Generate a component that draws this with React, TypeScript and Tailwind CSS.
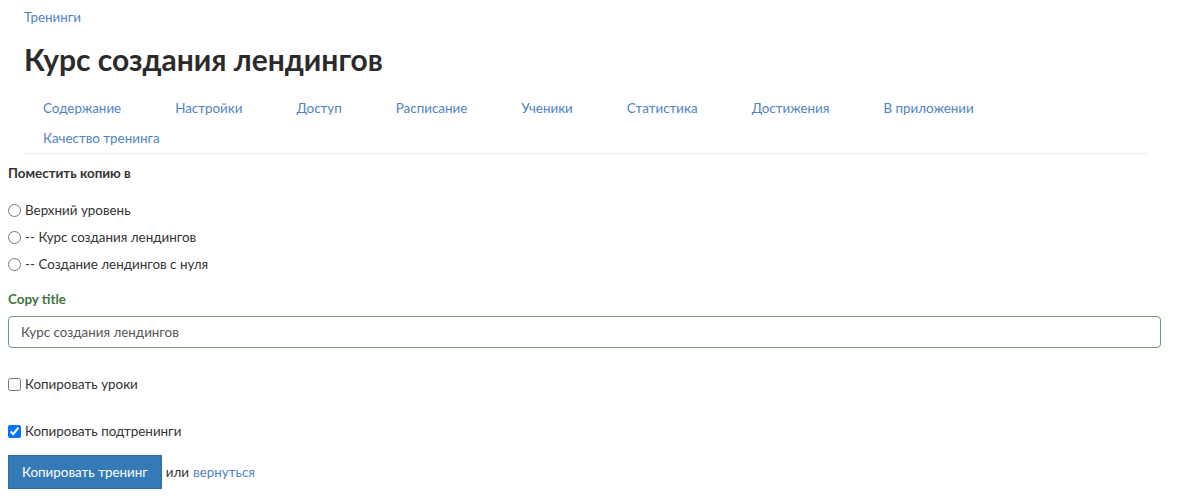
import React from 'react';

const tabs = [
  'Содержание',
  'Настройки',
  'Доступ',
  'Расписание',
  'Ученики',
  'Статистика',
  'Достижения',
  'В приложении',
  'Качество тренинга',
];

const targets = ['Верхний уровень', '-- Курс создания лендингов', '-- Создание лендингов с нуля'];

export default function App() {
  return (
    <div className="min-h-[504px] bg-white text-[13.4px] text-[#333] font-['Lato','Open_Sans',sans-serif]">
      <div className="px-6 pt-[7px]">
        <a className="block text-[#4f83c2] leading-[20px]">Тренинги</a>
        <h1 className="mt-[14px] text-[30px] font-bold leading-[36px] text-[#2b2b2b]">Курс создания лендингов</h1>
        <ul className="mt-[16px] mr-[28px] flex flex-wrap pl-[19px] border-b border-[#eee]">
          {tabs.map((t) => (
            <li key={t} className="mr-[54px] h-[30px] leading-[30px] text-[#4f83c2]">
              {t}
            </li>
          ))}
        </ul>
      </div>

      <div className="px-2">
        <div className="mt-[9px] font-bold leading-[20px]">Поместить копию в</div>
        <div className="mt-[17px] flex flex-col gap-[7px]">
          {targets.map((t) => (
            <label key={t} className="flex items-center gap-[4px] leading-[20px]">
              <input type="radio" name="target" className="m-0 w-[13px] h-[13px]" />
              <span>{t}</span>
            </label>
          ))}
        </div>

        <div className="mt-[15px] font-bold text-[#3c763d] leading-[20px]">Copy title</div>
        <input
          defaultValue="Курс создания лендингов"
          className="mt-[7px] w-[1153px] h-[32px] rounded-[4px] border border-[#6c9a6c] px-3 text-[#555] outline-none"
        />

        <label className="mt-[26px] flex items-center gap-[4px] leading-[20px]">
          <input type="checkbox" className="m-0 w-[13px] h-[13px]" />
          <span>Копировать уроки</span>
        </label>
        <label className="mt-[27px] flex items-center gap-[4px] leading-[20px]">
          <input type="checkbox" defaultChecked className="m-0 w-[13px] h-[13px]" />
          <span>Копировать подтренинги</span>
        </label>

        <div className="mt-[14px] flex items-center">
          <button className="h-[34px] px-[13px] bg-[#337ab7] text-white border border-[#2e6da4]">Копировать тренинг</button>
          <span className="ml-[4px]">или </span>
          <a className="ml-[4px] text-[#4f83c2]">вернуться</a>
        </div>
      </div>
    </div>
  );
}
